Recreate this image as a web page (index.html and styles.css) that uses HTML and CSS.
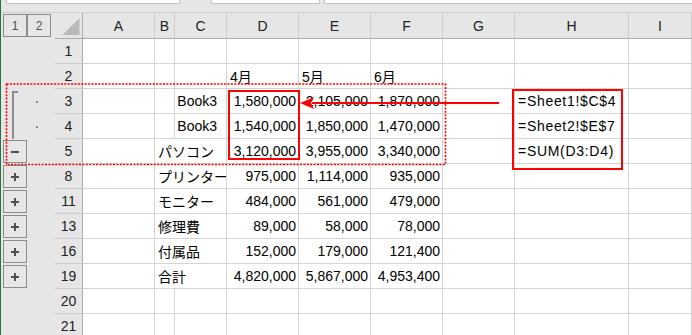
FILE: index.html
```html
<!DOCTYPE html>
<html lang="ja">
<head>
<meta charset="utf-8">
<title>Excel outline</title>
<link rel="stylesheet" href="styles.css">
</head>
<body>
<div class="app">
  <div class="fbar">
    <div class="fb fb1"></div>
    <div class="fb fb2"></div>
    <div class="fb fb3"></div>
  </div>
  <div class="grid">
    <!-- header row -->
    <div class="o oh"><span class="lvl">1</span><span class="lvl">2</span></div>
    <div class="corner"><svg width="27" height="25" viewBox="0 0 27 25"><polygon points="24.5,5 24.5,22 7.5,22" fill="#b9b9b9"/></svg></div>
    <div class="ch">A</div><div class="ch">B</div><div class="ch">C</div><div class="ch">D</div><div class="ch">E</div><div class="ch">F</div><div class="ch">G</div><div class="ch">H</div><div class="ch">I</div>

    <!-- row 1 -->
    <div class="o"></div><div class="rh">1</div>
    <div class="c"></div><div class="c"></div><div class="c"></div><div class="c"></div><div class="c"></div><div class="c"></div><div class="c"></div><div class="c"></div><div class="c"></div>

    <!-- row 2 -->
    <div class="o"></div><div class="rh">2</div>
    <div class="c"></div><div class="c"></div><div class="c"></div><div class="c">4月</div><div class="c">5月</div><div class="c">6月</div><div class="c"></div><div class="c"></div><div class="c"></div>

    <!-- row 3 -->
    <div class="o"><i class="bk bk-top"></i><i class="dot"></i></div><div class="rh">3</div>
    <div class="c"></div><div class="c"></div><div class="c r book">Book3</div><div class="c r">1,580,000</div><div class="c r">2,105,000</div><div class="c r">1,870,000</div><div class="c"></div><div class="c f">=Sheet1!$C$4</div><div class="c"></div>

    <!-- row 4 -->
    <div class="o"><i class="bk"></i><i class="dot"></i></div><div class="rh">4</div>
    <div class="c"></div><div class="c"></div><div class="c r book">Book3</div><div class="c r">1,540,000</div><div class="c r">1,850,000</div><div class="c r">1,470,000</div><div class="c"></div><div class="c f">=Sheet2!$E$7</div><div class="c"></div>

    <!-- row 5 -->
    <div class="o"><span class="ob"><svg width="8" height="2" viewBox="0 0 8 2"><rect width="8" height="2" fill="#505050"/></svg></span></div><div class="rh">5</div>
    <div class="c"></div><div class="c s2">パソコン</div><div class="c r">3,120,000</div><div class="c r">3,955,000</div><div class="c r">3,340,000</div><div class="c"></div><div class="c f">=SUM(D3:D4)</div><div class="c"></div>

    <!-- row 8 -->
    <div class="o"><span class="ob"><svg width="8" height="8" viewBox="0 0 8 8"><rect y="3" width="8" height="2" fill="#505050"/><rect x="3" width="2" height="8" fill="#505050"/></svg></span></div><div class="rh">8</div>
    <div class="c"></div><div class="c s2">プリンター</div><div class="c r">975,000</div><div class="c r">1,114,000</div><div class="c r">935,000</div><div class="c"></div><div class="c"></div><div class="c"></div>

    <!-- row 11 -->
    <div class="o"><span class="ob"><svg width="8" height="8" viewBox="0 0 8 8"><rect y="3" width="8" height="2" fill="#505050"/><rect x="3" width="2" height="8" fill="#505050"/></svg></span></div><div class="rh">11</div>
    <div class="c"></div><div class="c s2">モニター</div><div class="c r">484,000</div><div class="c r">561,000</div><div class="c r">479,000</div><div class="c"></div><div class="c"></div><div class="c"></div>

    <!-- row 13 -->
    <div class="o"><span class="ob"><svg width="8" height="8" viewBox="0 0 8 8"><rect y="3" width="8" height="2" fill="#505050"/><rect x="3" width="2" height="8" fill="#505050"/></svg></span></div><div class="rh">13</div>
    <div class="c"></div><div class="c s2">修理費</div><div class="c r">89,000</div><div class="c r">58,000</div><div class="c r">78,000</div><div class="c"></div><div class="c"></div><div class="c"></div>

    <!-- row 16 -->
    <div class="o"><span class="ob"><svg width="8" height="8" viewBox="0 0 8 8"><rect y="3" width="8" height="2" fill="#505050"/><rect x="3" width="2" height="8" fill="#505050"/></svg></span></div><div class="rh">16</div>
    <div class="c"></div><div class="c s2">付属品</div><div class="c r">152,000</div><div class="c r">179,000</div><div class="c r">121,400</div><div class="c"></div><div class="c"></div><div class="c"></div>

    <!-- row 19 -->
    <div class="o"><span class="ob"><svg width="8" height="8" viewBox="0 0 8 8"><rect y="3" width="8" height="2" fill="#505050"/><rect x="3" width="2" height="8" fill="#505050"/></svg></span></div><div class="rh">19</div>
    <div class="c"></div><div class="c s2">合計</div><div class="c r">4,820,000</div><div class="c r">5,867,000</div><div class="c r">4,953,400</div><div class="c"></div><div class="c"></div><div class="c"></div>

    <!-- row 20 -->
    <div class="o"></div><div class="rh">20</div>
    <div class="c"></div><div class="c"></div><div class="c"></div><div class="c"></div><div class="c"></div><div class="c"></div><div class="c"></div><div class="c"></div><div class="c"></div>

    <!-- row 21 -->
    <div class="o"></div><div class="rh">21</div>
    <div class="c"></div><div class="c"></div><div class="c"></div><div class="c"></div><div class="c"></div><div class="c"></div><div class="c"></div><div class="c"></div><div class="c"></div>
  </div>

  <svg class="notes" width="692" height="335" viewBox="0 0 692 335">
    <rect x="6.5" y="84" width="439" height="80.5" fill="none" stroke="#ff0000" stroke-width="1.6" stroke-dasharray="2 1.4"/>
    <rect x="229" y="91" width="70" height="68" fill="none" stroke="#ff0000" stroke-width="2"/>
    <rect x="513" y="90" width="109" height="79" fill="none" stroke="#ff0000" stroke-width="2"/>
    <line x1="312" y1="103" x2="499" y2="103" stroke="#ff0000" stroke-width="2"/>
    <polygon points="300,103 314,97 311,103 314,109" fill="#ff0000"/>
  </svg>
</div>
</body>
</html>
```

FILE: styles.css
```css
html, body {
  margin: 0;
  padding: 0;
}
body {
  width: 692px;
  height: 335px;
  overflow: hidden;
  background: #e6e6e6;
  font-family: "Liberation Sans", "Noto Sans CJK JP", sans-serif;
  font-size: 14px;
  color: #000;
}
.app {
  position: relative;
  width: 691px;
  height: 335px;
  border-left: 1px solid #217346;
  overflow: hidden;
}
.fbar {
  display: flex;
  align-items: flex-start;
  height: 12px;
  border-bottom: 1px solid #d2d2d2;
}
.fb {
  height: 3px;
  background: #fff;
  border: 1px solid #c4c4c4;
  border-top: none;
}
.fb1 { margin-left: 5px; width: 172px; }
.fb2 { margin-left: 31px; width: 107px; }
.fb3 { margin-left: 4px; flex: 1; border-right: none; }

.grid {
  display: grid;
  grid-template-columns: 54px 28px 72px 20px 52px 72px 72px 72px 72px 114px 1fr;
  grid-template-rows: 26px repeat(12, 25px);
}
.grid > div {
  box-sizing: border-box;
  min-width: 0;
}
.o {
  background: #e6e6e6;
  display: flex;
  align-items: flex-start;
}
.oh {
  padding: 1px 0 0 2px;
}
.lvl {
  box-sizing: border-box;
  width: 24px;
  height: 23px;
  border: 1px solid #8c8c8c;
  display: flex;
  align-items: center;
  justify-content: center;
  font-size: 12px;
  color: #505050;
}
.corner {
  background: #e6e6e6;
  border-right: 1px solid #ababab;
  border-bottom: 1px solid #ababab;
}
.corner svg { display: block; }
.ch {
  background: #e6e6e6;
  border-right: 1px solid #cdcdcd;
  border-bottom: 1px solid #ababab;
  display: flex;
  align-items: center;
  justify-content: center;
  color: #222;
}
.rh {
  background: #e6e6e6;
  border-right: 1px solid #ababab;
  border-bottom: 1px solid #cdcdcd;
  display: flex;
  align-items: center;
  justify-content: center;
  color: #222;
}
.c {
  background: #fff;
  border-right: 1px solid #d4d4d4;
  border-bottom: 1px solid #d4d4d4;
  display: flex;
  align-items: center;
  padding: 0 2px 0 3px;
  white-space: nowrap;
  overflow: hidden;
}
.r { justify-content: flex-end; }
.book { padding-right: 9px; }
.s2 { grid-column: span 2; }
.f { letter-spacing: 0.7px; }

.bk {
  display: block;
  box-sizing: border-box;
  margin-left: 11px;
  width: 6px;
  height: 25px;
  border-left: 2px solid #8c8c8c;
}
.bk-top {
  margin-top: 2px;
  height: 23px;
  border-top: 2px solid #8c8c8c;
}
.dot {
  display: block;
  width: 2px;
  height: 2px;
  margin: 12px 0 0 18px;
  background: #8c8c8c;
}
.ob {
  box-sizing: border-box;
  width: 24px;
  height: 23px;
  margin: 1px 0 0 2px;
  border: 1px solid #8c8c8c;
  display: flex;
  align-items: center;
  justify-content: center;
}
.ob svg { display: block; }

.notes {
  position: absolute;
  left: -1px;
  top: 0;
  pointer-events: none;
}
```
